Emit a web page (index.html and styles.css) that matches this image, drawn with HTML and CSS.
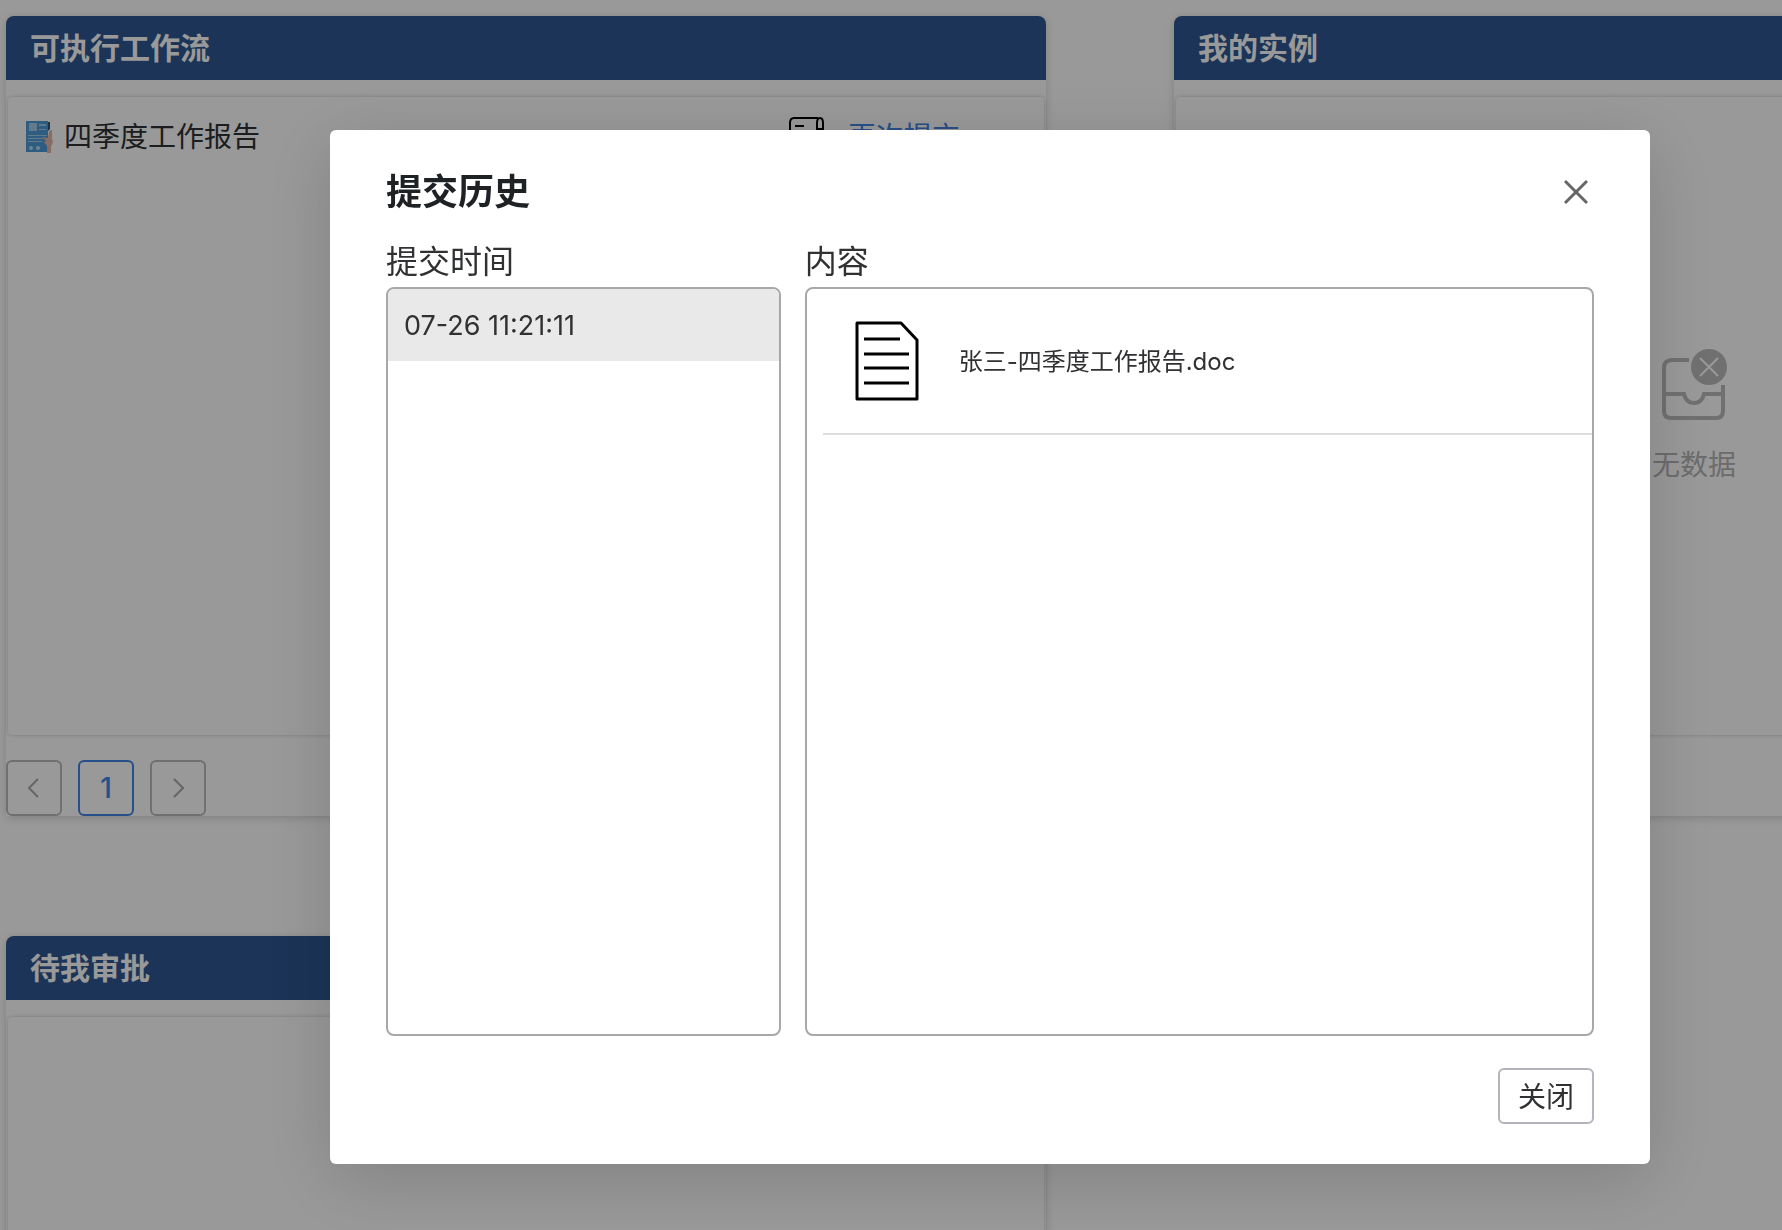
FILE: index.html
```html
<!DOCTYPE html>
<html lang="zh-CN">
<head>
<meta charset="utf-8">
<title>工作流</title>
<link rel="stylesheet" href="styles.css">
</head>
<body>
<main class="board">
  <section class="card">
    <h2 class="card-title">可执行工作流</h2>
    <div class="panel">
      <div class="flow">
        <svg class="flow-icon" width="28" height="32" viewBox="0 0 28 32" aria-hidden="true">
          <path d="M21 1h3v7l-3 3z" fill="#33536f"/>
          <path d="M0 0h22v31H0z" fill="#4f9bd8"/>
          <path d="M3 2h8v8H3zM13 3h7v2h-7zM13 8h7v1h-7zM2 14h19v1H2zM2 17h15v1H2zM2 20h14v1H2z" fill="#a4cdea"/>
          <circle cx="5" cy="27" r="2" fill="#b9dcf5"/>
          <circle cx="12" cy="27" r="2" fill="#b9dcf5"/>
          <path d="M16 16l6 1 1-7 3-1v9l1 3-2 5v6h-4v-7l-3-4 2-1z" fill="#e3b6a8"/>
        </svg>
        <span class="flow-name">四季度工作报告</span>
        <svg class="flow-scroll" width="36" height="40" viewBox="0 0 36 40" fill="none" stroke="#000" stroke-width="2" aria-hidden="true">
          <path d="M30 1H6Q2 1 2 6v28q0 4 4 4h20q3 0 3-4V6q0-5 3-5t3 5v6h-6M7 9h9M7 16h14"/>
        </svg>
        <a class="flow-link" href="#">再次提交</a>
      </div>
    </div>
    <nav class="pager" aria-label="分页">
      <button class="page" type="button" aria-label="上一页"><svg width="12" height="20" viewBox="0 0 12 20"><path d="M10 1L1 10l9 9"/></svg></button>
      <button class="page page-current" type="button">1</button>
      <button class="page" type="button" aria-label="下一页"><svg width="12" height="20" viewBox="0 0 12 20"><path d="M2 1l9 9-9 9"/></svg></button>
    </nav>
  </section>
  <section class="card">
    <h2 class="card-title">我的实例</h2>
    <div class="panel panel-empty">
      <svg width="66" height="72" viewBox="0 0 66 72" fill="none" stroke="#bbb" stroke-width="4" aria-hidden="true">
        <path d="M28 11H11q-8 0-8 8v43q0 7 7 7h45q7 0 7-7V36M3 45h20q2 9 10 9t10-9h19"/>
        <circle cx="48" cy="18" r="18" fill="#bbb" stroke="none"/>
        <path d="M39 9l18 18M57 9L39 27" stroke="#fff" stroke-width="2"/>
      </svg>
      <span>无数据</span>
    </div>
  </section>
  <section class="card">
    <h2 class="card-title">待我审批</h2>
    <div class="panel"></div>
  </section>
</main>
<div class="overlay">
  <div class="dialog" role="dialog" aria-modal="true" aria-labelledby="dialog-title">
    <header class="dialog-head">
      <h1 class="dialog-title" id="dialog-title">提交历史</h1>
      <button class="dismiss" type="button" aria-label="关闭"><svg width="26" height="26" viewBox="0 0 26 26"><path d="M2 2l22 22M24 2L2 24"/></svg></button>
    </header>
    <div class="columns">
      <section class="column">
        <h3 class="column-title">提交时间</h3>
        <div class="box"><button class="time" type="button">07-26 11:21:11</button></div>
      </section>
      <section class="column">
        <h3 class="column-title">内容</h3>
        <div class="box">
          <div class="file">
            <svg width="64" height="80" viewBox="0 0 64 80" fill="none" stroke="#000" stroke-width="3" aria-hidden="true">
              <path d="M2 2h44l16 17v59H2z" stroke-linejoin="round"/>
              <path d="M9 18h36M9 33h45M9 47h45M9 62h45"/>
            </svg>
            <span class="file-name">张三-四季度工作报告.doc</span>
          </div>
        </div>
      </section>
    </div>
    <footer class="dialog-foot"><button class="close" type="button">关闭</button></footer>
  </div>
</div>
</body>
</html>
```
FILE: styles.css
```css
* { box-sizing: border-box; }

body {
  margin: 0;
  background: #fff;
  color: #303133;
  font-family: Inter, "Noto Sans CJK SC", sans-serif;
  font-size: 28px;
  overflow: hidden;
}

h1, h2, h3 { margin: 0; }

button {
  padding: 0;
  background: transparent;
  color: inherit;
  font: inherit;
}

svg { display: block; flex: none; }

/* Background board */
.board {
  display: grid;
  grid-template-columns: repeat(2, minmax(1040px, 1fr));
  gap: 120px 128px;
  height: 100vh;
  padding: 16px 6px 0;
  overflow: hidden;
}

.card {
  align-self: start;
  background: #fff;
  border-radius: 8px 8px 0 0;
  box-shadow: 0 2px 8px rgba(0, 0, 0, 0.16);
}

.card-title {
  padding: 0 24px;
  border-radius: 8px 8px 0 0;
  background: #2d5791;
  color: #fff;
  font-size: 30px;
  font-weight: 700;
  line-height: 64px;
}

.panel {
  height: 638px;
  margin: 17px 2px 0;
  padding: 12px 18px;
  border-radius: 4px;
  box-shadow: 0 0 4px rgba(0, 0, 0, 0.2);
}

.card:nth-child(2) { padding-bottom: 81px; }

.flow {
  display: flex;
  align-items: center;
  line-height: 56px;
}

.flow-name { margin: 0 auto 0 10px; }
.flow-link { margin: 0 66px 0 24px; color: #4284e4; text-decoration: none; }

.pager {
  display: flex;
  gap: 16px;
  padding-top: 25px;
}

.page {
  display: grid;
  place-items: center;
  width: 56px;
  height: 56px;
  border: 2px solid #bbb;
  border-radius: 6px;
  color: #aaa;
}

.page svg {
  fill: none;
  stroke: currentColor;
  stroke-width: 2;
}

.page-current {
  border-color: #4284e4;
  color: #4284e4;
  font-weight: 500;
}

.panel-empty {
  display: flex;
  flex-direction: column;
  align-items: center;
  justify-content: center;
  gap: 22px;
  color: #b4b4b4;
}

/* Submission history dialog */
.overlay {
  position: fixed;
  inset: 0;
  display: flex;
  align-items: flex-start;
  padding: 130px 132px 0 330px;
  background: rgba(0, 0, 0, 0.4);
}

.dialog {
  flex: 1;
  padding: 40px 56px;
  border-radius: 6px;
  background: #fff;
  box-shadow: 0 16px 72px rgba(0, 0, 0, 0.16);
}

.dialog-head {
  display: flex;
  align-items: center;
  justify-content: space-between;
  height: 44px;
}

.dialog-title {
  color: #1f2225;
  font-size: 36px;
  font-weight: 600;
  line-height: 44px;
}

.dismiss {
  display: grid;
  place-items: center;
  width: 36px;
  height: 36px;
  border: 0;
}

.dismiss path {
  fill: none;
  stroke: #666;
  stroke-width: 3;
}

.columns {
  display: grid;
  grid-template-columns: 1fr 2fr;
  gap: 24px;
  padding-top: 23px;
}

.column-title {
  font-size: 32px;
  font-weight: 400;
  line-height: 50px;
}

.box {
  height: 749px;
  border: 2px solid #a8a8a8;
  border-radius: 8px;
  overflow: hidden;
}

.time {
  display: block;
  width: 100%;
  height: 72px;
  padding: 0 16px;
  border: 0;
  background: #e9e9e9;
  font-size: 27px;
  text-align: left;
}

.file {
  display: flex;
  align-items: center;
  gap: 40px;
  height: 146px;
  margin-left: 16px;
  padding-left: 32px;
  border-bottom: 2px solid #ddd;
  font-size: 24px;
}

.file-name { padding-bottom: 4px; }

.dialog-foot {
  display: flex;
  justify-content: flex-end;
  padding-top: 32px;
}

.close {
  width: 96px;
  height: 56px;
  padding-bottom: 2px;
  border: 2px solid #b4b4bc;
  border-radius: 6px;
}
```
